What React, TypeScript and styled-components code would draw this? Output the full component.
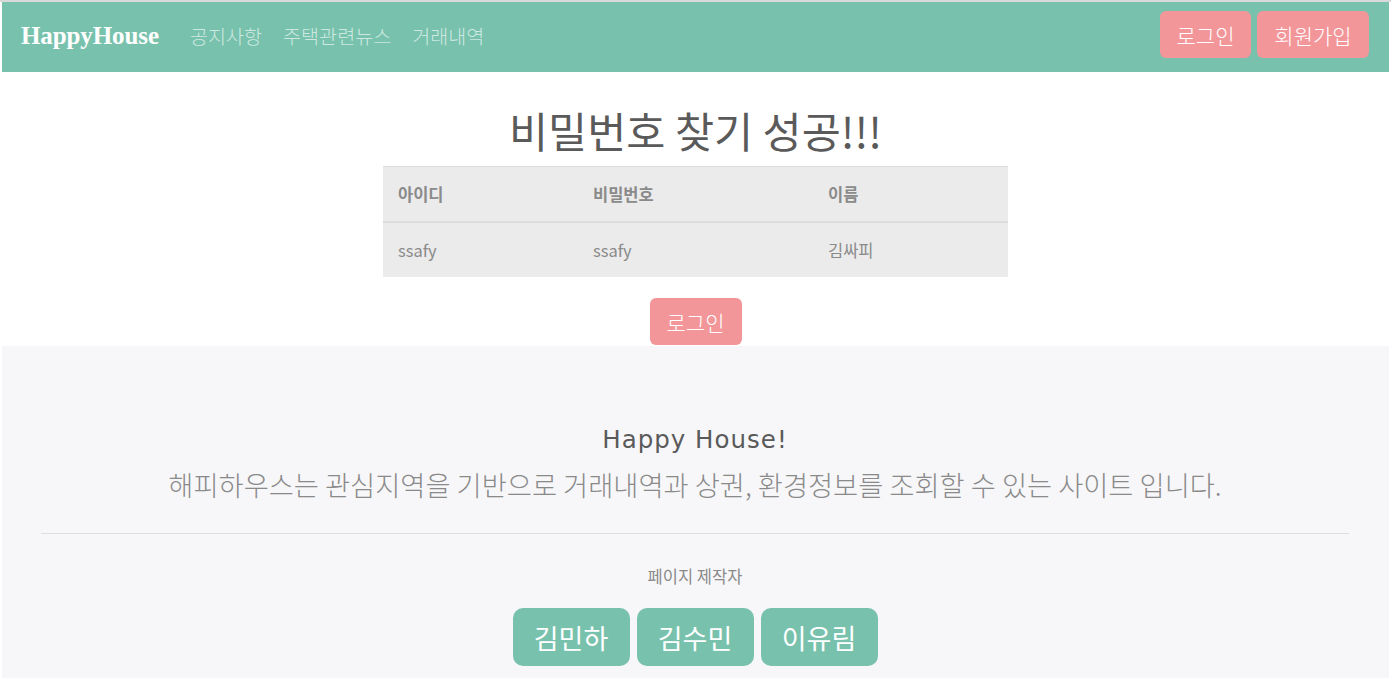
import React from "react";
import styled, { createGlobalStyle } from "styled-components";

const GlobalStyle = createGlobalStyle`
  html, body { margin: 0; padding: 0; background: #ffffff; }
  body { font-family: "Noto Sans CJK KR", "Noto Sans", sans-serif; color: #888888; }
  * { box-sizing: border-box; }
`;

const Page = styled.div`
  border-top: 2px solid #d9d9d9;
  padding: 0 2px;
  min-height: 678px;
  display: flex;
  flex-direction: column;
`;

const NavBar = styled.nav`
  height: 70px;
  background: #78c2ad;
  display: flex;
  align-items: center;
  padding: 0 20px 0 19px;
`;

const Brand = styled.a`
  font-family: "Liberation Serif", "DejaVu Serif", serif;
  font-weight: 700;
  font-size: 25px;
  letter-spacing: -0.1px;
  color: #ffffff;
  margin-right: 31px;
  margin-top: -2px;
`;

const NavLinks = styled.div`
  display: flex;
  gap: 21px;
  flex: 1;
  margin-top: -3px;
`;

const NavLink = styled.a`
  font-size: 19.6px;
  color: rgba(255, 255, 255, 0.65);
  font-weight: 300;
`;

const NavActions = styled.div`
  display: flex;
  gap: 6px;
  margin-top: -5px;
`;

const PinkButton = styled.button<{ $w: number }>`
  width: ${(p) => p.$w}px;
  height: 47px;
  border: none;
  border-radius: 6px;
  background: #f3969a;
  color: #ffffff;
  font-family: "Noto Sans CJK KR", sans-serif;
  font-size: 21px;
  font-weight: 300;
  padding: 0;
  display: flex;
  align-items: center;
  justify-content: center;
`;

const Main = styled.main`
  display: flex;
  flex-direction: column;
  align-items: center;
  padding-top: 28px;
  padding-bottom: 1px;
`;

const Title = styled.h1`
  margin: 0 0 6px;
  font-size: 42.5px;
  font-weight: 400;
  line-height: 60px;
  color: #5a5a5a;
`;

const Table = styled.div`
  width: 625px;
  background: #ebebeb;
  display: grid;
  grid-template-columns: 195px 235px 195px;
  border-top: 1px solid #dcdcdc;
`;

const Cell = styled.div<{ $head?: boolean }>`
  height: ${(p) => (p.$head ? 56 : 54)}px;
  padding: 0 15px;
  display: flex;
  align-items: center;
  font-size: 16.5px;
  font-weight: ${(p) => (p.$head ? 700 : 400)};
  color: #8a8a8a;
  border-bottom: ${(p) => (p.$head ? "2px solid #dcdcdc" : "none")};
`;

const LoginButtonWrap = styled.div`
  margin-top: 21px;
`;

const Footer = styled.footer`
  flex: 1;
  background: #f7f7f9;
  display: flex;
  flex-direction: column;
  align-items: center;
  padding: 74px 40px 0 39px;
`;

const FooterTitle = styled.div`
  font-family: "DejaVu Sans", "Open Sans", sans-serif;
  font-size: 24.5px;
  font-weight: 400;
  letter-spacing: 1px;
  color: #5a5a5a;
  line-height: 40px;
`;

const FooterText = styled.p`
  margin: 4px 0 0;
  font-size: 27.3px;
  font-weight: 300;
  color: #8a8a8a;
  line-height: 40px;
`;

const Divider = styled.hr`
  align-self: stretch;
  border: none;
  border-top: 1px solid #dedede;
  margin: 29px 0 0;
`;

const Makers = styled.div`
  margin-top: 30px;
  font-size: 16.5px;
  color: #8a8a8a;
`;

const MakerRow = styled.div`
  display: flex;
  gap: 7px;
  margin-top: 20px;
`;

const MintButton = styled.button`
  width: 117px;
  height: 58px;
  border: none;
  border-radius: 10px;
  background: #78c2ad;
  color: #ffffff;
  font-family: "Noto Sans CJK KR", sans-serif;
  font-size: 27px;
  padding: 0;
`;

export default function App() {
  return (
    <>
      <GlobalStyle />
      <Page>
        <NavBar>
          <Brand>HappyHouse</Brand>
          <NavLinks>
            <NavLink>공지사항</NavLink>
            <NavLink>주택관련뉴스</NavLink>
            <NavLink>거래내역</NavLink>
          </NavLinks>
          <NavActions>
            <PinkButton $w={91}>로그인</PinkButton>
            <PinkButton $w={112}>회원가입</PinkButton>
          </NavActions>
        </NavBar>
        <Main>
          <Title>비밀번호 찾기 성공!!!</Title>
          <Table>
            <Cell $head>아이디</Cell>
            <Cell $head>비밀번호</Cell>
            <Cell $head>이름</Cell>
            <Cell>ssafy</Cell>
            <Cell>ssafy</Cell>
            <Cell>김싸피</Cell>
          </Table>
          <LoginButtonWrap>
            <PinkButton $w={92}>로그인</PinkButton>
          </LoginButtonWrap>
        </Main>
        <Footer>
          <FooterTitle>Happy House!</FooterTitle>
          <FooterText>해피하우스는 관심지역을 기반으로 거래내역과 상권, 환경정보를 조회할 수 있는 사이트 입니다.</FooterText>
          <Divider />
          <Makers>페이지 제작자</Makers>
          <MakerRow>
            <MintButton>김민하</MintButton>
            <MintButton>김수민</MintButton>
            <MintButton>이유림</MintButton>
          </MakerRow>
        </Footer>
      </Page>
    </>
  );
}
